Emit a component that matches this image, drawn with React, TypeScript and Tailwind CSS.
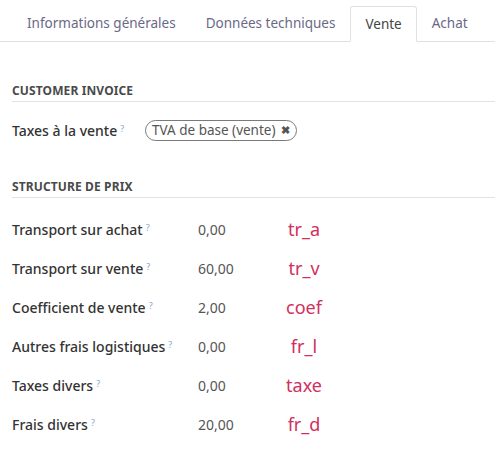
import { Fragment } from "react";

const tabs = ["Informations générales", "Données techniques", "Vente", "Achat"];

const prices = [
  { label: "Transport sur achat", value: "0,00", code: "tr_a" },
  { label: "Transport sur vente", value: "60,00", code: "tr_v" },
  { label: "Coefficient de vente", value: "2,00", code: "coef" },
  { label: "Autres frais logistiques", value: "0,00", code: "fr_l" },
  { label: "Taxes divers", value: "0,00", code: "taxe" },
  { label: "Frais divers", value: "20,00", code: "fr_d" },
];

function Help() {
  return <sup className="ml-[3px] text-[9px] font-normal text-[#7fa6cf]">?</sup>;
}

function SectionTitle({ children }: { children: string }) {
  return (
    <div className="border-b border-[#e2e2e2] pb-[2px] text-[12px] leading-[17px] font-bold uppercase tracking-[0.01em] text-[#4a4a4a]">
      {children}
    </div>
  );
}

export default function App() {
  return (
    <div className="h-[466px] w-[495px] bg-white font-['Noto_Sans',sans-serif] text-[#333]">
      <div className="flex h-[42px] items-end border-b border-[#dee2e6] pl-[12px]">
        {tabs.map((t) => (
          <div
            key={t}
            className={
              t === "Vente"
                ? "-mb-px flex h-[36px] items-center rounded-t-[3px] border border-b-white border-[#dee2e6] bg-white px-[14px] text-[13.5px] text-[#444]"
                : "flex h-[36px] items-center border border-transparent px-[14px] text-[13.5px] text-[#6b6887]"
            }
          >
            {t}
          </div>
        ))}
      </div>

      <div className="pl-3 pt-[40px]">
        <SectionTitle>Customer invoice</SectionTitle>
        <div className="mt-[18px] flex items-center">
          <div className="w-[133px] text-[14px] font-medium text-[#333]">
            Taxes à la vente
            <Help />
          </div>
          <span className="flex h-[21px] items-center gap-[5px] rounded-full border border-[#7a7a7a] pl-[6px] pr-[6px] text-[13.5px] text-[#555]">
            TVA de base (vente)
            <span className="text-[11px] font-bold text-[#555]">✖</span>
          </span>
        </div>

        <div className="mt-[37px]">
          <SectionTitle>Structure de prix</SectionTitle>
        </div>

        <div className="mt-[12px] grid grid-cols-[186px_74px_64px]">
          {prices.map((p) => (
            <Fragment key={p.code}>
              <div className="flex h-[39px] items-center text-[14px] font-medium text-[#333]">
                <span>
                  {p.label}
                  <Help />
                </span>
              </div>
              <div className="flex h-[39px] items-center text-[14px] text-[#555]">{p.value}</div>
              <div className="flex h-[39px] items-center justify-center text-[18px] text-[#d12f5e]">{p.code}</div>
            </Fragment>
          ))}
        </div>
      </div>
    </div>
  );
}
